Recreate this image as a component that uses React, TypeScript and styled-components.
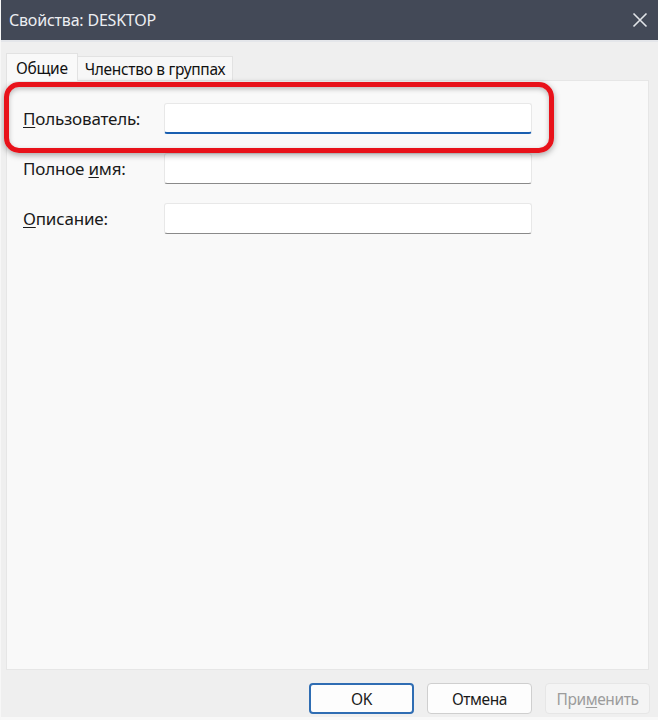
import React from 'react'
import styled, { createGlobalStyle } from 'styled-components'

const GlobalStyle = createGlobalStyle`
  html, body {
    margin: 0;
    padding: 0;
    background: #f0f0f0;
  }
  body {
    font-family: "Noto Sans", "Open Sans", sans-serif;
  }
`

const Window = styled.div`
  width: 658px;
  height: 720px;
  display: flex;
  flex-direction: column;
  background: #efefef;
  border-left: 1px solid #f7f7f7;
  box-sizing: border-box;
`

const TitleBar = styled.div`
  height: 40px;
  flex: none;
  display: flex;
  align-items: center;
  justify-content: space-between;
  padding: 0 10px 0 8px;
  background: #434957;
  border-bottom: 2px solid #e4e6ea;
  color: #eceef2;
  font-size: 16px;
  letter-spacing: -0.2px;
`

const CloseIcon = () => (
  <svg width="16" height="16" viewBox="0 0 16 16">
    <path d="M1.5 1.5 L14.5 14.5 M14.5 1.5 L1.5 14.5" stroke="#e2e4e8" strokeWidth="1.6" fill="none" />
  </svg>
)

const TabRow = styled.div`
  display: flex;
  align-items: flex-end;
  padding: 10px 0 0 5px;
  height: 28px;
  flex: none;
`

const Tab = styled.div<{ $active?: boolean }>`
  height: ${p => (p.$active ? 28 : 24)}px;
  box-sizing: border-box;
  padding: 0 ${p => (p.$active ? 9 : 7)}px;
  display: flex;
  align-items: center;
  font-size: 15.5px;
  color: #111;
  letter-spacing: -0.3px;
  background: ${p => (p.$active ? '#f9f9f9' : '#f7f7f7')};
  border: 1px solid #e2e2e2;
  border-bottom: none;
  ${p => (p.$active ? 'margin-bottom: -1px; position: relative; z-index: 1;' : 'border-left: none;')}
`

const Panel = styled.div`
  flex: 1;
  margin: 0 9px 0 5px;
  position: relative;
  background: #f9f9f9;
  border: 1px solid #e6e6e6;
  padding-top: 22px;
  display: flex;
  flex-direction: column;
  gap: 19px;
`

const Row = styled.div`
  display: flex;
  align-items: center;
  height: 31px;
`

const Label = styled.label`
  width: 157px;
  padding-left: 16px;
  box-sizing: border-box;
  font-size: 17px;
  color: #1a1a1a;
  letter-spacing: -0.2px;

  u {
    text-decoration: underline;
    text-underline-offset: 2px;
  }
`

const Input = styled.div<{ $focused?: boolean }>`
  width: 368px;
  height: 31px;
  box-sizing: border-box;
  background: #ffffff;
  border: 1px solid #e8e8e8;
  border-bottom: ${p => (p.$focused ? '2px solid #1a5fb0' : '1px solid #8a8a8a')};
  border-radius: 3px;
`

const Highlight = styled.div`
  position: absolute;
  left: -3px;
  top: 1px;
  width: 550px;
  height: 71px;
  box-sizing: border-box;
  border: 5px solid #e8121a;
  border-radius: 15px;
  box-shadow: 0 2px 6px rgba(0, 0, 0, 0.35), inset 0 2px 5px rgba(0, 0, 0, 0.25);
  pointer-events: none;
`

const Footer = styled.div`
  flex: none;
  height: 50px;
  display: flex;
  justify-content: flex-end;
  align-items: flex-start;
  gap: 13px;
  padding: 13px 8px 0 0;
  box-sizing: border-box;
  border-bottom: 3px solid #f8f8f8;
`

const Button = styled.button<{ $variant?: 'primary' | 'disabled' }>`
  width: 105px;
  height: 31px;
  box-sizing: border-box;
  border-radius: 4px;
  font-family: inherit;
  font-size: 15.5px;
  letter-spacing: -0.4px;
  background: ${p => (p.$variant === 'disabled' ? '#f4f4f4' : '#fdfdfd')};
  color: ${p => (p.$variant === 'disabled' ? '#9c9c9c' : '#1a1a1a')};
  border: ${p =>
    p.$variant === 'primary'
      ? '2px solid #2f6db3'
      : p.$variant === 'disabled'
      ? '1px solid #e6e6e6'
      : '1px solid #cfcfcf'};

  u {
    text-underline-offset: 2px;
  }
`

export default function App() {
  return (
    <>
      <GlobalStyle />
      <Window>
        <TitleBar>
          <span>Свойства: DESKTOP</span>
          <CloseIcon />
        </TitleBar>
        <TabRow>
          <Tab $active>Общие</Tab>
          <Tab>Членство в группах</Tab>
        </TabRow>
        <Panel>
          <Row>
            <Label><u>П</u>ользователь:</Label>
            <Input $focused />
          </Row>
          <Row>
            <Label>Полное <u>и</u>мя:</Label>
            <Input />
          </Row>
          <Row>
            <Label><u>О</u>писание:</Label>
            <Input />
          </Row>
          <Highlight />
        </Panel>
        <Footer>
          <Button $variant="primary">OK</Button>
          <Button>Отмена</Button>
          <Button $variant="disabled">При<u>м</u>енить</Button>
        </Footer>
      </Window>
    </>
  )
}
